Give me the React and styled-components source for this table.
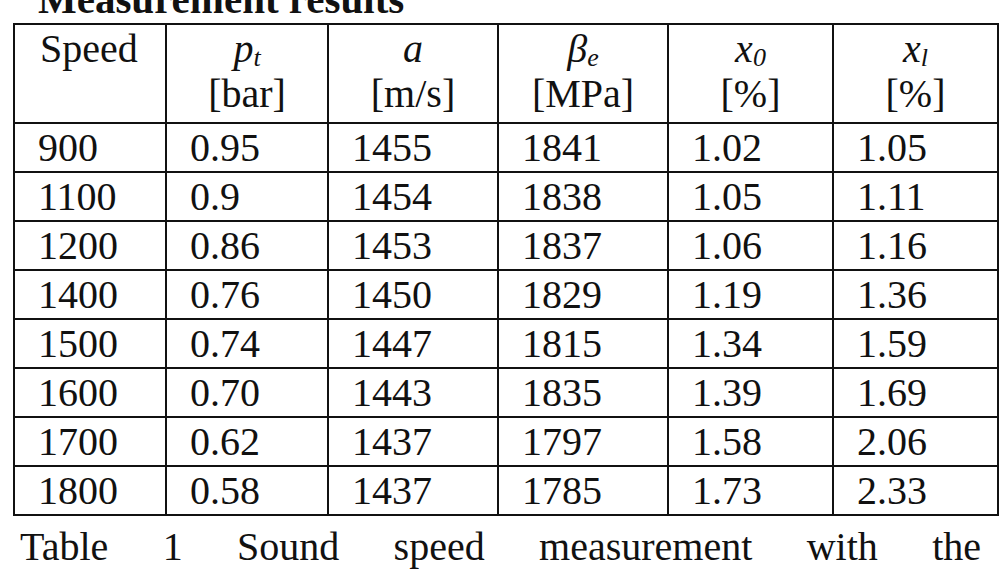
import React from 'react';
import styled, { createGlobalStyle } from 'styled-components';

const GlobalStyle = createGlobalStyle`
  html, body {
    margin: 0;
    padding: 0;
    background: #fff;
  }
  body {
    font-family: "Liberation Serif", "Times New Roman", serif;
    color: #111;
    overflow: hidden;
  }
`;

// datos de la tabla de medición
const rows = [
  ['900', '0.95', '1455', '1841', '1.02', '1.05'],
  ['1100', '0.9', '1454', '1838', '1.05', '1.11'],
  ['1200', '0.86', '1453', '1837', '1.06', '1.16'],
  ['1400', '0.76', '1450', '1829', '1.19', '1.36'],
  ['1500', '0.74', '1447', '1815', '1.34', '1.59'],
  ['1600', '0.70', '1443', '1835', '1.39', '1.69'],
  ['1700', '0.62', '1437', '1797', '1.58', '2.06'],
  ['1800', '0.58', '1437', '1785', '1.73', '2.33'],
];

const colWidths = [152, 162, 170, 170, 165, 165];

const App = () => {
  return (
    <Page>
      <GlobalStyle />
      <Title>Measurement results</Title>
      <Table>
        <colgroup>
          {colWidths.map((w, i) => (
            <col key={i} width={w} />
          ))}
        </colgroup>
        <thead>
          <tr>
            <HeadCell $left>Speed</HeadCell>
            <HeadCell>
              <Sym>p</Sym><Sub>t</Sub>
              <br />[bar]
            </HeadCell>
            <HeadCell>
              <Sym>a</Sym>
              <br />[m/s]
            </HeadCell>
            <HeadCell>
              <Sym>β</Sym><Sub>e</Sub>
              <br />[MPa]
            </HeadCell>
            <HeadCell>
              <Sym>x</Sym><Sub>0</Sub>
              <br />[%]
            </HeadCell>
            <HeadCell>
              <Sym>x</Sym><Sub>l</Sub>
              <br />[%]
            </HeadCell>
          </tr>
        </thead>
        <tbody>
          {rows.map((row) => (
            <tr key={row[0]}>
              {row.map((v, i) => (
                <Cell key={i}>{v}</Cell>
              ))}
            </tr>
          ))}
        </tbody>
      </Table>
      <Caption>Table 1 Sound speed measurement with the</Caption>
    </Page>
  );
};

export default App;

const Page = styled.div`
  width: 1005px;
  height: 570px;
  overflow: hidden;
`;

const Title = styled.div`
  font-weight: bold;
  font-size: 41px;
  line-height: 40px;
  margin: -21px 0 4px 38px;
`;

const Table = styled.table`
  border-collapse: collapse;
  table-layout: fixed;
  width: 986px;
  margin-left: 13px;
  border: 2px solid #111;
  font-size: 40px;
  line-height: 45px;
`;

const HeadCell = styled.th`
  border: 2px solid #111;
  height: 96px;
  padding: 1px 0 0 ${(p) => (p.$left ? '25px' : '0')};
  font-weight: normal;
  vertical-align: top;
  text-align: ${(p) => (p.$left ? 'left' : 'center')};
`;

const Sym = styled.i`
  font-style: italic;
`;

const Sub = styled.sub`
  font-style: italic;
  font-size: 26px;
  line-height: 0;
  vertical-align: -4px;
`;

const Cell = styled.td`
  border: 2px solid #111;
  height: 46px;
  padding: 1px 0 0 23px;
  vertical-align: top;
  white-space: nowrap;
`;

const Caption = styled.div`
  font-size: 40px;
  line-height: 45px;
  margin: 8px 24px 0 20px;
  text-align: justify;
  text-align-last: justify;
`;
